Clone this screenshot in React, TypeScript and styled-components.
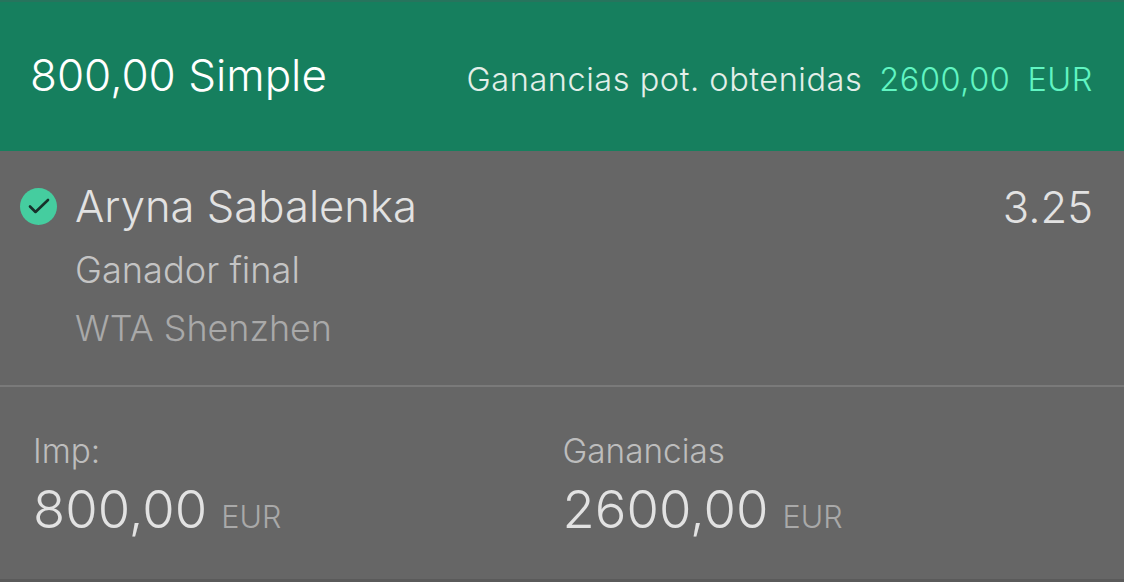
import React from "react";
import styled, { createGlobalStyle } from "styled-components";

const Global = createGlobalStyle`
  html, body { margin: 0; padding: 0; background: #666666; }
  body { font-family: Inter, "Liberation Sans", sans-serif; overflow: hidden; }
`;

const Page = styled.div`
  width: 1124px;
  height: 582px;
  display: flex;
  flex-direction: column;
  background: #666666;
  border-bottom: 3px solid #5a5a5a;
  box-sizing: border-box;
`;

const Header = styled.header`
  height: 151px;
  box-sizing: border-box;
  flex: none;
  display: flex;
  align-items: center;
  justify-content: space-between;
  padding: 0 31px 0 30px;
  background: #167f5e;
  border-top: 2px solid #27745d;
`;

const Title = styled.h1`
  margin: 0 0 4px;
  font-size: 44px;
  font-weight: 300;
  letter-spacing: 0;
  color: #ffffff;
`;

const Returns = styled.div`
  display: flex;
  align-items: baseline;
  font-size: 32.5px;
  font-weight: 300;
  letter-spacing: 0.55px;
  color: #e3efe9;
  padding-top: 6px;
`;

const ReturnsValue = styled.span<{ $gap: number }>`
  margin-left: ${(p) => p.$gap}px;
  color: #61f5c2;
`;

const Selection = styled.section`
  height: 236px;
  flex: none;
  box-sizing: border-box;
  display: grid;
  grid-template-columns: 37px 1fr auto;
  grid-template-rows: auto auto auto;
  column-gap: 18px;
  align-content: start;
  padding: 32px 31px 0 20px;
  border-bottom: 2px solid #7a7a7a;
`;

const Tick = styled.span`
  width: 37px;
  height: 37px;
  align-self: center;
  margin-top: -2px;
  border-radius: 50%;
  background: #45cd9f;
  display: flex;
  align-items: center;
  justify-content: center;
`;

const Runner = styled.div`
  font-size: 43.6px;
  line-height: 48px;
  font-weight: 300;
  color: #e2e2e2;
`;

const Odds = styled.div`
  font-size: 43.5px;
  line-height: 48px;
  font-weight: 300;
  color: #e2e2e2;
`;

const Market = styled.div<{ $muted?: boolean }>`
  grid-column: 2 / 4;
  font-size: ${(p) => (p.$muted ? 35.9 : 36.2)}px;
  font-weight: 300;
  line-height: 40px;
  margin-top: ${(p) => (p.$muted ? 18 : 19)}px;
  color: ${(p) => (p.$muted ? "#a9a9a9" : "#c4c4c4")};
`;

const Totals = styled.section`
  flex: 1;
  display: grid;
  grid-template-columns: 529.5px 1fr;
  padding: 46px 33px 0;
`;

const Total = styled.div`
  display: flex;
  flex-direction: column;
`;

const TotalLabel = styled.div`
  font-size: 33.3px;
  line-height: 36px;
  font-weight: 300;
  color: #bdbdbd;
`;

const TotalValue = styled.div`
  margin-top: 10px;
  display: flex;
  align-items: baseline;
  gap: 14px;
  font-size: 52.6px;
  line-height: 60px;
  font-weight: 300;
  color: #e2e2e2;
`;

const Currency = styled.span`
  font-size: 30.5px;
  color: #a9a9a9;
`;

export default function App() {
  return (
    <>
      <Global />
      <Page>
        <Header>
          <Title>800,00 Simple</Title>
          <Returns>
            Ganancias pot. obtenidas
            <ReturnsValue $gap={17}>2600,00</ReturnsValue>
            <ReturnsValue $gap={17}>EUR</ReturnsValue>
          </Returns>
        </Header>
        <Selection>
          <Tick>
            <svg width="24" height="20" viewBox="0 0 24 20" fill="none">
              <path d="M3 10.5 L8.5 16 L21 4" stroke="#17302a" strokeWidth="2.6" strokeLinecap="round" strokeLinejoin="round" />
            </svg>
          </Tick>
          <Runner>Aryna Sabalenka</Runner>
          <Odds>3.25</Odds>
          <Market>Ganador final</Market>
          <Market $muted>WTA Shenzhen</Market>
        </Selection>
        <Totals>
          <Total>
            <TotalLabel>Imp:</TotalLabel>
            <TotalValue>
              800,00 <Currency>EUR</Currency>
            </TotalValue>
          </Total>
          <Total>
            <TotalLabel>Ganancias</TotalLabel>
            <TotalValue>
              2600,00 <Currency>EUR</Currency>
            </TotalValue>
          </Total>
        </Totals>
      </Page>
    </>
  );
}
